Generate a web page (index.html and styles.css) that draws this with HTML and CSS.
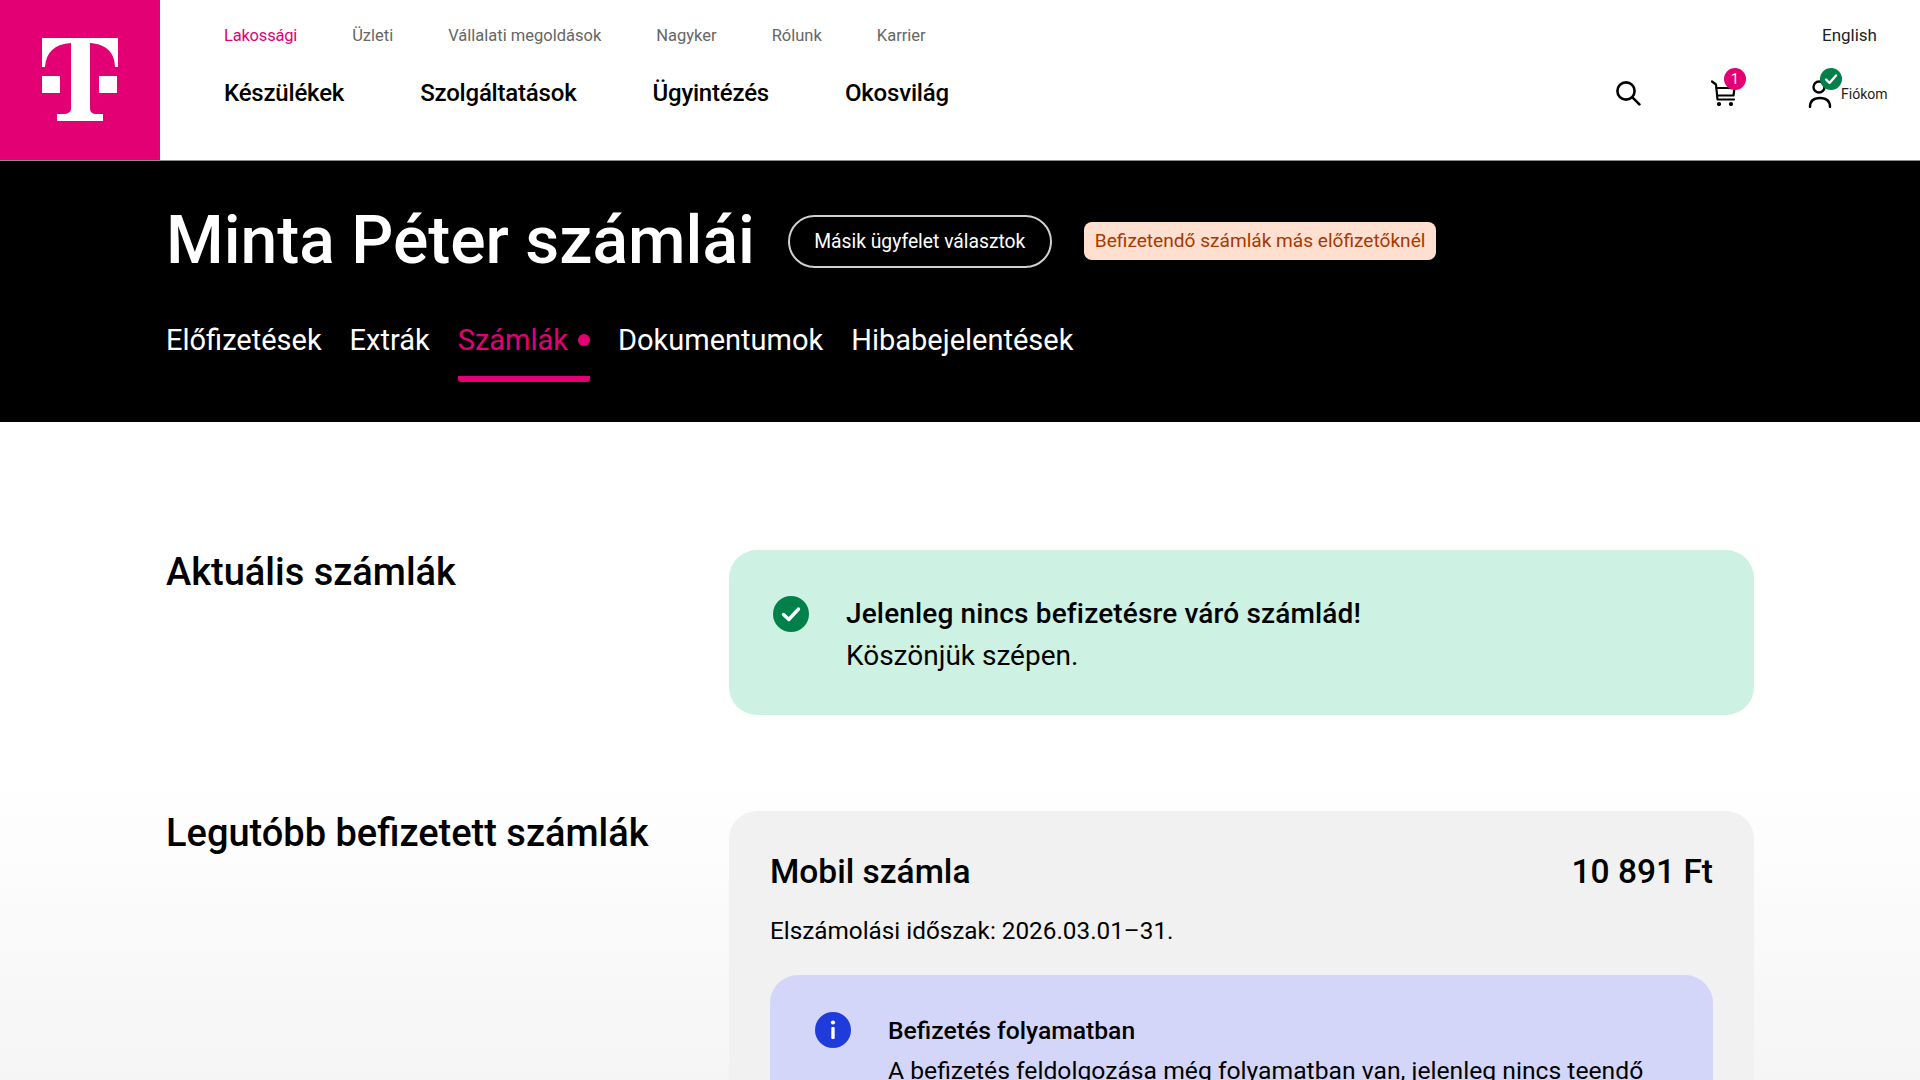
FILE: index.html
```html
<!DOCTYPE html>
<html lang="hu">
<head>
    <meta charset="UTF-8">
    <meta name="viewport" content="width=device-width, initial-scale=1.0">
    <title>Minta Péter számlái</title>
    <link rel="stylesheet" href="styles.css">
</head>
<body>

    <header class="site-header">
        <a class="logo" href="#">
            <svg viewBox="0 0 160 160" width="160" height="160">
                <path fill="#fff" d="M42 38H118V67H115C115 52 105 44 90 43V108C90 112 92 114 97 114H103V121H57V114H63C68 114 71 112 71 108V43C55 44 46 52 45 67H42Z"/>
                <rect fill="#fff" x="42" y="76" width="18" height="17"/>
                <rect fill="#fff" x="99" y="76" width="18" height="17"/>
            </svg>
        </a>
        <div class="nav-area">
            <div class="nav-top">
                <a class="active" href="#">Lakossági</a>
                <a href="#">Üzleti</a>
                <a href="#">Vállalati megoldások</a>
                <a href="#">Nagyker</a>
                <a href="#">Rólunk</a>
                <a href="#">Karrier</a>
            </div>
            <nav class="nav-main">
                <a href="#">Készülékek</a>
                <a href="#">Szolgáltatások</a>
                <a href="#">Ügyintézés</a>
                <a href="#">Okosvilág</a>
            </nav>
        </div>
        <div class="header-side">
            <a class="lang" href="#">English</a>
            <div class="header-icons">
                <a class="icon-btn search-btn" href="#">
                    <svg viewBox="0 0 26 26" width="26" height="26" fill="none" stroke="#000" stroke-width="2.6" stroke-linecap="round">
                        <circle cx="11" cy="11" r="8.6"/>
                        <path d="M17.4 17.4L24.4 24.4"/>
                    </svg>
                </a>
                <a class="icon-btn cart-btn" href="#">
                    <svg viewBox="0 0 26 26" width="26" height="26" fill="none" stroke="#000" stroke-width="2.2" stroke-linecap="round" stroke-linejoin="round">
                        <path d="M1 1.5L5 4.5L6.5 19.5H23"/>
                        <path d="M5.5 8H23.5L22.5 15.5H6.5"/>
                        <circle cx="8" cy="24" r="1" fill="#000"/>
                        <circle cx="20" cy="24" r="1" fill="#000"/>
                    </svg>
                    <span class="badge badge-pink">1</span>
                </a>
                <a class="icon-btn account-btn" href="#">
                    <svg viewBox="0 0 24 28" width="24" height="28" fill="none" stroke="#000" stroke-width="2.4" stroke-linecap="round">
                        <circle cx="11" cy="7" r="5.5"/>
                        <path d="M2 27C2 21 6 18 12 18C18 18 22 21 22 27"/>
                    </svg>
                    <span class="badge badge-green">
                        <svg viewBox="0 0 22 22" width="22" height="22" fill="none" stroke="#fff" stroke-width="2.4" stroke-linecap="round" stroke-linejoin="round"><path d="M6 11.5L9.5 15L16 7.5"/></svg>
                    </span>
                    <span class="account-label">Fiókom</span>
                </a>
            </div>
        </div>
    </header>

    <section class="hero">
        <div class="hero-head">
            <h1>Minta Péter számlái</h1>
            <a class="outline-btn" href="#">Másik ügyfelet választok</a>
            <a class="warn-tag" href="#">Befizetendő számlák más előfizetőknél</a>
        </div>
        <div class="tabs">
            <a href="#">Előfizetések</a>
            <a href="#">Extrák</a>
            <a class="active" href="#">Számlák<span class="tab-dot"></span></a>
            <a href="#">Dokumentumok</a>
            <a href="#">Hibabejelentések</a>
        </div>
    </section>

    <main class="content">
        <div class="row row-current">
            <h2>Aktuális számlák</h2>
            <div class="notice notice-ok">
                <svg class="notice-icon" viewBox="0 0 36 36" width="36" height="36">
                    <circle cx="18" cy="18" r="18" fill="#00804a"/>
                    <path d="M10.5 18.5L15.8 23.5L25.5 13" fill="none" stroke="#fff" stroke-width="3.4" stroke-linecap="round" stroke-linejoin="round"/>
                </svg>
                <div class="notice-text">
                    <strong>Jelenleg nincs befizetésre váró számlád!</strong>
                    <p>Köszönjük szépen.</p>
                </div>
            </div>
        </div>
        <div class="row">
            <h2>Legutóbb befizetett számlák</h2>
            <div class="bill-card">
                <div class="bill-head">
                    <span>Mobil számla</span>
                    <span>10 891 Ft</span>
                </div>
                <p class="bill-period">Elszámolási időszak: 2026.03.01–31.</p>
                <div class="notice notice-info">
                    <svg class="notice-icon" viewBox="0 0 36 36" width="36" height="36">
                        <circle cx="18" cy="18" r="18" fill="#1f3bdc"/>
                        <rect x="16.3" y="15" width="3.4" height="12" rx="1" fill="#fff"/>
                        <circle cx="18" cy="10.5" r="2.1" fill="#fff"/>
                    </svg>
                    <div class="notice-text">
                        <strong>Befizetés folyamatban</strong>
                        <p>A befizetés feldolgozása még folyamatban van, jelenleg nincs teendő</p>
                    </div>
                </div>
            </div>
        </div>
    </main>

</body>
</html>
```

FILE: styles.css
```css
/* Global Styles */
html, body {
    height: 1080px;
    overflow: hidden;
}

body {
    margin: 0;
    font-family: "Roboto", "Liberation Sans", sans-serif;
    color: #000;
    background-color: #fff;
}

a {
    color: inherit;
    text-decoration: none;
}

h1, h2, p {
    margin: 0;
}

/* Header */
.site-header {
    display: flex;
    height: 160px;
    border-bottom: 1px solid #8c8c8c;
    background-color: #fff;
}

.logo {
    width: 160px;
    height: 160px;
    background-color: #e20074;
    flex-shrink: 0;
}

.logo svg {
    display: block;
}

.nav-area {
    padding-left: 64px;
    flex-grow: 1;
}

.nav-top {
    display: flex;
    gap: 55px;
    padding-top: 26px;
    font-size: 16.5px;
    line-height: 20px;
    color: #666;
}

.nav-top .active {
    color: #e20074;
    letter-spacing: -0.2px;
}

.nav-main {
    display: flex;
    gap: 76px;
    padding-top: 28px;
    font-size: 24px;
    line-height: 38px;
    font-weight: 500;
    letter-spacing: -0.2px;
}

.header-side {
    width: 320px;
    position: relative;
}

.lang {
    position: absolute;
    top: 25px;
    right: 43px;
    font-size: 17px;
    line-height: 20px;
    color: #222;
}

.header-icons {
    display: flex;
    padding-top: 80px;
    padding-left: 15px;
}

.icon-btn {
    position: relative;
    display: block;
    height: 28px;
}

.search-btn {
    width: 96px;
}

.cart-btn {
    width: 97px;
}

.badge {
    position: absolute;
    top: -12px;
    width: 22px;
    height: 22px;
    border-radius: 50%;
    color: #fff;
    font-size: 14px;
    line-height: 22px;
    text-align: center;
}

.badge svg {
    display: block;
}

.badge-pink {
    left: 13px;
    background-color: #e20074;
}

.badge-green {
    left: 12px;
    background-color: #00804a;
}

.account-btn {
    display: flex;
    align-items: center;
}

.account-label {
    margin-left: 9px;
    font-size: 14px;
    color: #222;
}

/* Black title band */
.hero {
    height: 261px;
    padding-left: 166px;
    background-color: #000;
    color: #fff;
    box-sizing: border-box;
}

.hero-head {
    display: flex;
    align-items: center;
    padding-top: 35px;
    height: 90px;
}

.hero-head h1 {
    font-size: 66px;
    line-height: 90px;
    font-weight: 500;
}

.outline-btn {
    margin-left: 33px;
    width: 264px;
    height: 53px;
    box-sizing: border-box;
    border: 2px solid #d0d0d0;
    border-radius: 27px;
    font-size: 19.3px;
    line-height: 49px;
    text-align: center;
}

.warn-tag {
    margin-left: 32px;
    height: 38px;
    padding: 0 11px;
    border-radius: 8px;
    background-color: #ffdfd0;
    color: #a63a00;
    font-size: 19.1px;
    line-height: 38px;
}

.tabs {
    display: flex;
    gap: 28px;
    margin-top: 28px;
}

.tabs a {
    display: flex;
    align-items: center;
    height: 68px;
    font-size: 29px;
    padding-bottom: 16px;
    box-sizing: border-box;
}

.tabs .active {
    color: #e20074;
    border-bottom: 6px solid #e20074;
    border-radius: 3px;
    padding-bottom: 10px;
}

.tab-dot {
    width: 12px;
    height: 12px;
    margin-left: 10px;
    border-radius: 50%;
    background-color: #e20074;
}

/* Content */
.content {
    height: 658px;
    padding: 128px 166px 0;
    box-sizing: border-box;
    background: linear-gradient(#fff 53%, #f5f5f5 100%);
}

.row {
    display: grid;
    grid-template-columns: 563px 1025px;
}

.row-current {
    margin-bottom: 96px;
}

.row h2 {
    font-size: 38px;
    line-height: 44px;
    font-weight: 500;
}

.notice {
    display: flex;
    gap: 37px;
}

.notice-icon {
    flex-shrink: 0;
}

.notice-ok {
    height: 165px;
    padding: 46px 0 0 44px;
    box-sizing: border-box;
    border-radius: 28px;
    background-color: #cdf1e2;
}

.notice-ok .notice-text {
    margin-top: -3px;
    font-size: 28px;
    line-height: 42px;
}

.notice-ok strong {
    letter-spacing: 0.15px;
}

.notice-text strong {
    display: block;
    font-weight: 500;
}

.bill-card {
    padding: 37px 41px 0;
    border-radius: 28px;
    background-color: #f1f1f1;
    height: 420px;
    box-sizing: border-box;
}

.bill-head {
    display: flex;
    justify-content: space-between;
    font-size: 33.5px;
    line-height: 48px;
    font-weight: 500;
}

.bill-period {
    margin-top: 17px;
    font-size: 24.3px;
    line-height: 36px;
}

.notice-info {
    margin-top: 26px;
    padding: 37px 40px 0 45px;
    border-radius: 28px;
    background-color: #d3d6f9;
    height: 300px;
    box-sizing: border-box;
}

.notice-info .notice-text {
    margin-top: -1px;
    font-size: 24.7px;
    line-height: 40px;
}
```
